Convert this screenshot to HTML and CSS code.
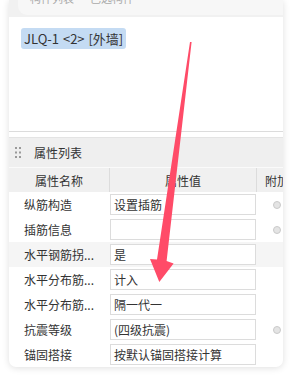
FILE: index.html
```html
<!DOCTYPE html>
<html lang="zh-CN">
<head>
<meta charset="UTF-8">
<meta name="viewport" content="width=device-width, initial-scale=1.0">
<title>属性列表</title>
<link rel="stylesheet" href="styles.css">
</head>
<body>
  <div class="panel">
    <div class="panel-top">
      <div class="top-tab"><span>构件列表 · 已选构件</span></div>
    </div>

    <div class="select-area">
      <span class="tag">JLQ-1 &lt;2&gt; [外墙]</span>
    </div>

    <div class="prop-head">
      <svg class="grip" width="6" height="11" viewBox="0 0 6 11">
        <rect x="0" y="0" width="2" height="2" fill="#9a9a9a"/>
        <rect x="4" y="0" width="2" height="2" fill="#9a9a9a"/>
        <rect x="0" y="4.5" width="2" height="2" fill="#9a9a9a"/>
        <rect x="4" y="4.5" width="2" height="2" fill="#9a9a9a"/>
        <rect x="0" y="9" width="2" height="2" fill="#9a9a9a"/>
        <rect x="4" y="9" width="2" height="2" fill="#9a9a9a"/>
      </svg>
      <span class="prop-title">属性列表</span>
    </div>

    <div class="prop-table">
      <div class="row row-header">
        <div class="cell name">属性名称</div>
        <div class="cell value">属性值</div>
        <div class="cell extra">附加</div>
      </div>

      <div class="row">
        <div class="cell name">纵筋构造</div>
        <div class="cell value"><div class="input">设置插筋</div></div>
        <div class="cell extra"><span class="radio"></span></div>
      </div>
      <div class="row">
        <div class="cell name">插筋信息</div>
        <div class="cell value"><div class="input"></div></div>
        <div class="cell extra"><span class="radio"></span></div>
      </div>
      <div class="row row-group">
        <div class="cell name">水平钢筋拐...</div>
        <div class="cell value"><div class="input">是</div></div>
        <div class="cell extra"></div>
      </div>
      <div class="row">
        <div class="cell name">水平分布筋...</div>
        <div class="cell value"><div class="input">计入</div></div>
        <div class="cell extra"></div>
      </div>
      <div class="row">
        <div class="cell name">水平分布筋...</div>
        <div class="cell value"><div class="input">隔一代一</div></div>
        <div class="cell extra"></div>
      </div>
      <div class="row">
        <div class="cell name">抗震等级</div>
        <div class="cell value"><div class="input">(四级抗震)</div></div>
        <div class="cell extra"><span class="radio"></span></div>
      </div>
      <div class="row">
        <div class="cell name">锚固搭接</div>
        <div class="cell value"><div class="input">按默认锚固搭接计算</div></div>
        <div class="cell extra"></div>
      </div>
    </div>
  </div>

  <!-- annotation arrow drawn over the panel -->
  <svg class="arrow" width="291" height="377" viewBox="0 0 291 377">
    <polygon points="190,42 191.6,42 166.6,261 173.6,263.6 159.3,282 150,259 157,259.6" fill="#ff4b68"/>
  </svg>
</body>
</html>
```

FILE: styles.css
```css
* {
  margin: 0;
  padding: 0;
  box-sizing: border-box;
}

body {
  font-family: "Noto Sans CJK SC", "Noto Sans", sans-serif;
  font-size: 12px;
  color: #333;
  background-color: #fff;
  width: 291px;
  height: 377px;
  overflow: hidden;
  position: relative;
}

/* Panel card */
.panel {
  margin-left: 9px;
  width: 274px;
  background-color: #fff;
  border-radius: 0 0 7px 7px;
  box-shadow: 0 1px 7px rgba(0, 0, 0, 0.13);
  overflow: hidden;
}

.panel-top {
  height: 17px;
  background-color: #f1f1f1;
  padding-left: 9px;
}

.top-tab {
  height: 15px;
  background-color: #f7f7f7;
  border-bottom-left-radius: 9px;
  overflow: hidden;
}

.top-tab span {
  display: block;
  margin-top: -8px;
  padding-left: 12px;
  line-height: 12px;
  font-size: 11px;
  color: #aaa;
}

/* Selected component area */
.select-area {
  height: 115px;
  padding: 11px 0 0 12px;
  border-bottom: 1px solid #dcdcdc;
}

.tag {
  display: inline-block;
  height: 21px;
  line-height: 21px;
  padding: 0 3px;
  font-size: 13px;
  word-spacing: 1px;
  color: #333;
  background-color: #c4dbf3;
  border-radius: 3px;
}

/* Property list header */
.prop-head {
  margin-top: 5px;
  height: 30px;
  display: flex;
  align-items: center;
  background-color: #efefef;
  border-top: 1px solid #e4e4e4;
  padding-left: 6px;
}

.grip {
  display: block;
}

.prop-title {
  margin-left: 13px;
  font-size: 12px;
  color: #333;
}

/* Property table */
.row {
  display: grid;
  grid-template-columns: 101px 147px 26px;
  height: 25px;
  align-items: center;
}

.cell {
  white-space: nowrap;
  overflow: hidden;
}

.name {
  padding-left: 15px;
}

.row-header {
  background-color: #f0f0f0;
  border-top: 1px solid #fafafa;
  align-items: stretch;
}

.row-header .cell {
  display: flex;
  align-items: center;
}

.row-header .name {
  justify-content: center;
  padding-left: 0;
  border-right: 1px solid #dcdcdc;
}

.row-header .value {
  justify-content: center;
  border-right: 1px solid #dcdcdc;
}

.row-header .extra {
  padding-left: 8px;
}

.row-group {
  background-color: #f5f5f5;
}

.input {
  width: 146px;
  height: 21px;
  line-height: 19px;
  padding-left: 3px;
  background-color: #fff;
  border: 1px solid #dcdcdc;
  color: #333;
}

.extra {
  display: flex;
  align-items: center;
}

.radio {
  display: block;
  width: 8px;
  height: 8px;
  margin-left: 16px;
  border-radius: 50%;
  border: 1px solid #c9c9c9;
  background-color: #e4e4e4;
}

/* Annotation overlay */
.arrow {
  position: absolute;
  top: 0;
  left: 0;
  pointer-events: none;
}
```
